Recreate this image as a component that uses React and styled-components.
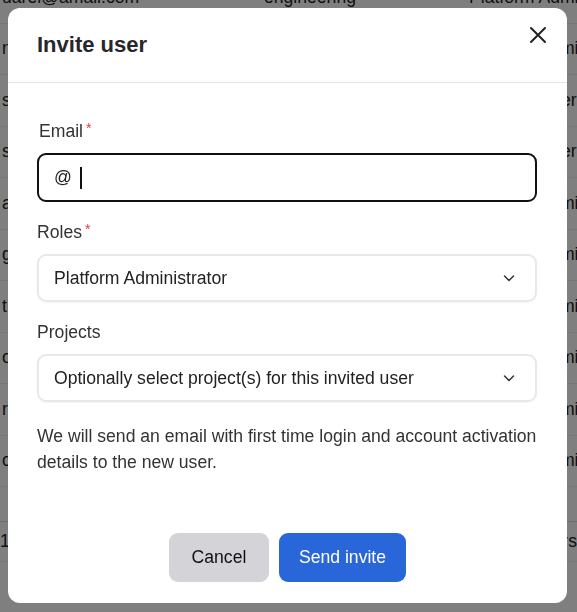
import React from "react";
import styled, { createGlobalStyle } from "styled-components";

const GlobalStyle = createGlobalStyle`
  html, body {
    margin: 0;
    padding: 0;
    background: #ffffff;
    font-family: "Liberation Sans", Arial, sans-serif;
    overflow: hidden;
  }
`;

const users = [
  { email: "uarel@amail.com", team: "engineering", role: "Platform Administrator" },
  { email: "nora.kent@amail.com", team: "engineering", role: "Platform Administrator" },
  { email: "scott.m@amail.com", team: "design", role: "Platform User" },
  { email: "sc.lee@amail.com", team: "design", role: "Platform User" },
  { email: "atlas.j@amail.com", team: "operations", role: "Platform Administrator" },
  { email: "greg.h@amail.com", team: "operations", role: "Platform Administrator" },
  { email: "thomas.b@amail.com", team: "finance", role: "Platform Administrator" },
  { email: "olivia.p@amail.com", team: "finance", role: "Platform Administrator" },
  { email: "rachel.w@amail.com", team: "support", role: "Platform Administrator" },
  { email: "carl.d@amail.com", team: "support", role: "Platform Administrator" },
];

function Chevron() {
  return (
    <svg width="14" height="14" viewBox="0 0 14 14" fill="none">
      <path
        d="M2.5 5 L7 9.5 L11.5 5"
        stroke="#333"
        strokeWidth="1.5"
        strokeLinecap="round"
        strokeLinejoin="round"
      />
    </svg>
  );
}

function CloseIcon() {
  return (
    <svg width="18" height="18" viewBox="0 0 18 18" fill="none">
      <path
        d="M2 2 L16 16 M16 2 L2 16"
        stroke="#222"
        strokeWidth="2"
        strokeLinecap="round"
      />
    </svg>
  );
}

function App() {
  return (
    <>
      <GlobalStyle />
      <Page>
        <Table>
          {users.map((u, i) => (
            <Row key={i}>
              <Cell>{u.email}</Cell>
              <Cell>{u.team}</Cell>
              <Cell>{u.role}</Cell>
            </Row>
          ))}
        </Table>
        <TableFooter>
          <span>10 per page</span>
          <span>Showing 10 users</span>
        </TableFooter>
      </Page>

      <Overlay>
        <Dialog>
          <Header>
            <Title>Invite user</Title>
            <CloseButton aria-label="Close">
              <CloseIcon />
            </CloseButton>
          </Header>

          <Body>
            <Fields>
              <Field>
                <Label $indent>
                  Email<Required>*</Required>
                </Label>
                <TextInput>
                  @<Caret />
                </TextInput>
              </Field>

              <Field>
                <Label>
                  Roles<Required>*</Required>
                </Label>
                <Select>
                  <span>Platform Administrator</span>
                  <Chevron />
                </Select>
              </Field>

              <Field>
                <Label>Projects</Label>
                <Select>
                  <span>Optionally select project(s) for this invited user</span>
                  <Chevron />
                </Select>
              </Field>
            </Fields>

            <Note>
              We will send an email with first time login and account activation
              details to the new user.
            </Note>
          </Body>

          <Footer>
            <Button>Cancel</Button>
            <Button $primary>Send invite</Button>
          </Footer>
        </Dialog>
      </Overlay>
    </>
  );
}

export default App;

const Page = styled.main`
  height: 612px;
  margin-top: -28px;
  display: flex;
  flex-direction: column;
  color: #222;
  font-size: 17.6px;
`;

const Table = styled.div`
  display: flex;
  flex-direction: column;
`;

const Row = styled.div`
  display: grid;
  grid-template-columns: 262px 205px 1fr;
  height: 50.5px;
  align-items: center;
  border-bottom: 1px solid #eeeeee;
  white-space: nowrap;
  overflow: hidden;
`;

const Cell = styled.div`
  padding-left: 2px;
  overflow: hidden;
`;

const TableFooter = styled.div`
  margin-top: 34px;
  height: 39px;
  display: flex;
  align-items: center;
  justify-content: space-between;
  border-top: 1px solid #dddddd;
  border-bottom: 1px solid #eeeeee;
  white-space: nowrap;
`;

const Overlay = styled.div`
  position: fixed;
  inset: 0;
  background: rgba(0, 0, 0, 0.5);
`;

const Dialog = styled.div`
  position: absolute;
  top: 8px;
  left: 8px;
  width: 559px;
  height: 595px;
  background: #ffffff;
  border-radius: 12px;
  display: flex;
  flex-direction: column;
  font-family: "Liberation Sans", Arial, sans-serif;
  color: #222;
`;

const Header = styled.header`
  height: 74px;
  padding: 0 20px 0 29px;
  display: flex;
  align-items: center;
  justify-content: space-between;
  border-bottom: 1px solid #e4e4e7;
`;

const Title = styled.h2`
  margin: 0;
  font-size: 22px;
  font-weight: 700;
  color: #27272a;
`;

const CloseButton = styled.button`
  align-self: flex-start;
  margin-top: 18px;
  padding: 0;
  border: none;
  background: none;
  width: 18px;
  height: 18px;
  display: flex;
`;

const Body = styled.div`
  padding: 36px 30px 0 29px;
  display: flex;
  flex-direction: column;
`;

const Fields = styled.div`
  display: flex;
  flex-direction: column;
  gap: 18px;
`;

const Field = styled.div`
  display: flex;
  flex-direction: column;
  gap: 10px;
`;

const Label = styled.label`
  font-size: 17.6px;
  line-height: 24px;
  color: #333;
  padding-left: ${(p) => (p.$indent ? "2px" : "0")};
`;

const Required = styled.span`
  color: #e53935;
  font-size: 14px;
  vertical-align: top;
  margin-left: 3px;
  position: relative;
  top: -3px;
`;

const TextInput = styled.div`
  box-sizing: border-box;
  height: 49px;
  border: 2px solid #111;
  border-radius: 9px;
  padding: 0 15px;
  display: flex;
  align-items: center;
  font-size: 17.6px;
  color: #222;
`;

const Caret = styled.span`
  display: inline-block;
  width: 2px;
  height: 22px;
  background: #111;
  margin-left: 8px;
`;

const Select = styled.div`
  box-sizing: border-box;
  height: 48px;
  border: 2px solid #e8e8ea;
  border-radius: 9px;
  box-shadow: 0 1px 2px rgba(0, 0, 0, 0.04);
  padding: 0 19px 0 15px;
  display: flex;
  align-items: center;
  justify-content: space-between;
  font-size: 17.6px;
  color: #222;
`;

const Note = styled.p`
  margin: 21px 0 0;
  font-size: 17.6px;
  line-height: 26px;
  color: #333;
`;

const Footer = styled.footer`
  margin-top: auto;
  padding-bottom: 21px;
  display: flex;
  justify-content: center;
  gap: 10px;
`;

const Button = styled.button`
  height: 49px;
  min-width: 100px;
  padding: 0 20px;
  border: none;
  border-radius: 9px;
  font-family: "Liberation Sans", Arial, sans-serif;
  font-size: 17.6px;
  background: ${(p) => (p.$primary ? "#2966d9" : "#d4d4d8")};
  color: ${(p) => (p.$primary ? "#ffffff" : "#111111")};
`;
